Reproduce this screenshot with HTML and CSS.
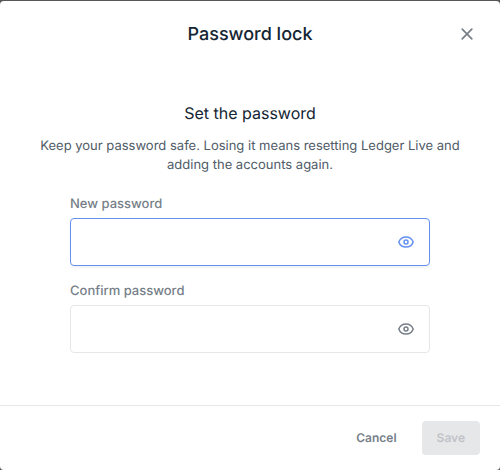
FILE: index.html
```html
<!DOCTYPE html>
<html lang="en">
<head>
<meta charset="utf-8">
<title>Password lock</title>
<link rel="stylesheet" href="styles.css">
</head>
<body>
<main class="modal">
  <header class="header">
    <h1 class="title">Password lock</h1>
    <button class="close" aria-label="Close">
      <svg width="16" height="16" viewBox="0 0 16 16" fill="none" stroke="currentColor" stroke-width="1.7" stroke-linecap="round"><path d="M3.200 3.200l9.600 9.600M12.800 3.200l-9.600 9.600"/></svg>
    </button>
  </header>
  <section class="content">
    <h2 class="subtitle">Set the password</h2>
    <p class="description">Keep your password safe. Losing it means resetting Ledger Live and adding the accounts again.</p>
    <form class="form">
      <div class="field">
        <label class="label" for="new">New password</label>
        <div class="input-box focused">
          <input class="input" id="new" type="password">
          <svg class="eye" width="16" height="16" viewBox="0 0 16 16" fill="none" stroke="currentColor" stroke-width="1.5"><path d="M.8 8C1.900 4.900 4.600 2.900 8 2.900S14.100 4.900 15.200 8C14.100 11.100 11.400 13.100 8 13.100S1.900 11.100.8 8z" stroke-linejoin="round"/><circle cx="8" cy="8" r="2"/></svg>
        </div>
      </div>
      <div class="field">
        <label class="label" for="confirm">Confirm password</label>
        <div class="input-box">
          <input class="input" id="confirm" type="password">
          <svg class="eye" width="16" height="16" viewBox="0 0 16 16" fill="none" stroke="currentColor" stroke-width="1.5"><path d="M.8 8C1.900 4.900 4.600 2.900 8 2.900S14.100 4.900 15.200 8C14.100 11.100 11.400 13.100 8 13.100S1.900 11.100.8 8z" stroke-linejoin="round"/><circle cx="8" cy="8" r="2"/></svg>
        </div>
      </div>
    </form>
  </section>
  <footer class="footer">
    <button class="button">Cancel</button>
    <button class="button save" disabled>Save</button>
  </footer>
</main>
</body>
</html>
```
FILE: styles.css
```css
* { box-sizing: border-box; }
body {
  margin: 0;
  padding-top: 1px;
  height: 470px;
  background: #575757;
  font-family: Inter, sans-serif;
  text-rendering: geometricPrecision;
  overflow: hidden;
}
.modal {
  display: flex;
  flex-direction: column;
  height: 469px;
  background: #fff;
  border-radius: 4px;
}
.header {
  display: grid;
  grid-template-columns: 48px 1fr 48px;
  align-items: center;
  height: 66px;
  padding: 0 9px;
}
.title {
  grid-column: 2;
  margin: 2px 0 0;
  text-align: center;
  font-size: 18px;
  font-weight: 500;
  line-height: 22px;
  color: #142533;
}
.close {
  display: flex;
  justify-content: center;
  padding: 0;
  border: 0;
  background: none;
  color: #767f88;
}
.content {
  flex: 1;
  padding: 35px 30px 0;
  text-align: center;
}
.subtitle {
  margin: 0;
  font-size: 16px;
  font-weight: 400;
  line-height: 22px;
  color: #142533;
}
.description {
  margin: 13px 0 0;
  font-size: 13px;
  line-height: 19px;
  color: #4f5b67;
}
.form {
  display: flex;
  flex-direction: column;
  gap: 17px;
  margin: 21px 40px 0;
  text-align: left;
}
.label {
  display: block;
  margin-bottom: 6px;
  font-size: 13px;
  font-weight: 500;
  line-height: 16px;
  color: #767f88;
}
.input-box {
  display: flex;
  align-items: center;
  height: 48px;
  padding: 0 15px;
  border: 1px solid #e6e7e8;
  border-radius: 4px;
  color: #767f88;
}
.focused {
  border-color: #6490f1;
  color: #6490f1;
  box-shadow: 0 2px 2px rgba(0, 0, 0, .05);
}
.input {
  flex: 1;
  min-width: 0;
  border: 0;
  outline: 0;
  background: none;
}
.footer {
  display: flex;
  justify-content: flex-end;
  align-items: center;
  gap: 10px;
  height: 65px;
  padding: 0 20px;
  border-top: 1px solid #e6e7e8;
}
.button {
  height: 34px;
  padding: 0 15px;
  border: 0;
  border-radius: 4px;
  background: none;
  font: 600 12px/16px Inter, sans-serif;
  color: #767f88;
  text-rendering: inherit;
}
.save {
  background: #e6e7e8;
  color: #bfc3c8;
}
```
